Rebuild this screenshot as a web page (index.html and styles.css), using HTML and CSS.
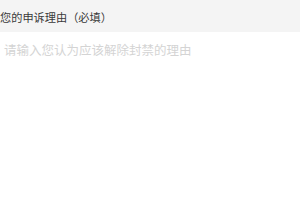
FILE: index.html
```html
<!DOCTYPE html>
<html lang="zh-CN">
<head>
  <meta charset="UTF-8" />
  <meta name="viewport" content="width=device-width, initial-scale=1.0"/>
  <title>申诉</title>
  <link rel="stylesheet" href="styles.css">
</head>
<body>

  <div class="label">您的申诉理由（必填）</div>
  <textarea class="reason" placeholder="请输入您认为应该解除封禁的理由"></textarea>

</body>
</html>
```

FILE: styles.css
```css
body {
  font-family: "Noto Sans CJK SC", "Noto Sans", sans-serif;
  margin: 0;
  padding: 0;
  background-color: #fff;
}
.label {
  height: 32px;
  line-height: 35px;
  background-color: #f4f4f4;
  color: #3a3a3a;
  font-size: 11.2px;
}
.reason {
  display: block;
  box-sizing: border-box;
  width: 100%;
  height: 150px;
  border: none;
  outline: none;
  resize: none;
  padding: 9px 4px;
  font-family: inherit;
  font-size: 12.5px;
  line-height: 18px;
  color: #333;
  background: #fff;
}
.reason::placeholder {
  color: #d4d4d4;
}
```
